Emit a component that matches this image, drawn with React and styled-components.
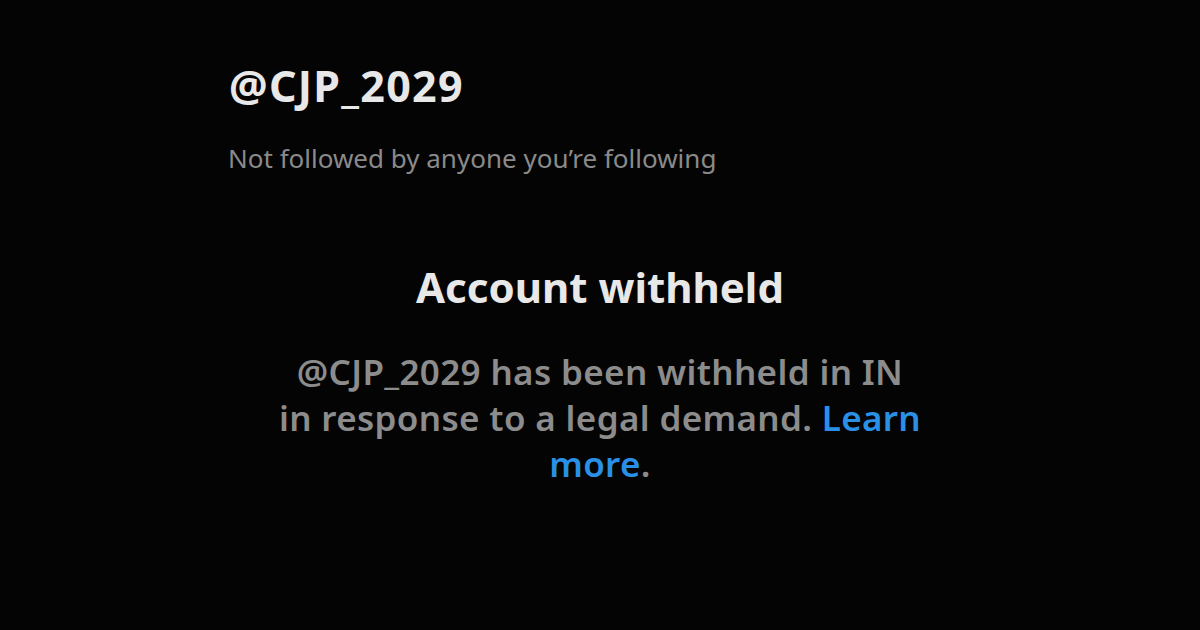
import React from "react";
import styled, { createGlobalStyle } from "styled-components";

const Global = createGlobalStyle`
  html, body { margin: 0; padding: 0; background: #040404; }
  body { font-family: "Noto Sans", "Open Sans", sans-serif; }
`;

const Page = styled.div`
  width: 1200px;
  height: 630px;
  background: #040404;
  box-sizing: border-box;
  padding: 60px 0 0 229px;
  display: flex;
  flex-direction: column;
  overflow: hidden;
`;

const Handle = styled.h1`
  margin: 0;
  font-size: 43px;
  font-weight: 700;
  color: #e8e8e8;
  line-height: 52px;
  letter-spacing: 1.3px;
`;

const Subtle = styled.p`
  margin: 29px 0 0 -1px;
  font-size: 26px;
  font-weight: 400;
  color: #8a8a8a;
  line-height: 34px;
`;

const Notice = styled.section`
  margin: 87px 0 0 -229px;
  width: 1200px;
  display: flex;
  flex-direction: column;
  align-items: center;
`;

const Title = styled.h2`
  margin: 0;
  font-size: 42px;
  font-weight: 700;
  color: #e8e8e8;
  line-height: 50px;
`;

const Body = styled.p`
  margin: 37px 0 0 0;
  width: 700px;
  text-align: center;
  font-size: 35px;
  font-weight: 600;
  letter-spacing: 0.35px;
  color: #8c8c8c;
  line-height: 46px;
`;

const Link = styled.a`
  color: #2a90e6;
  text-decoration: none;
`;

export default function App() {
  return (
    <Page>
      <Global />
      <Handle>@CJP_2029</Handle>
      <Subtle>Not followed by anyone you’re following</Subtle>
      <Notice>
        <Title>Account withheld</Title>
        <Body>
          @CJP_2029 has been withheld in IN
          <br />
          in response to a legal demand. <Link href="#">Learn</Link>
          <br />
          <Link href="#">more</Link>.
        </Body>
      </Notice>
    </Page>
  );
}
